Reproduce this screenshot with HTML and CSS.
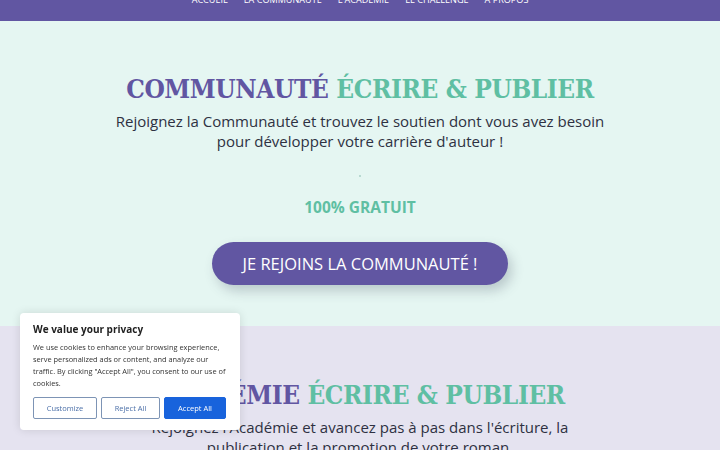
FILE: index.html
```html
<!DOCTYPE html>
<html lang="fr">
<head>
<meta charset="utf-8">
<title>Communauté Écrire & Publier</title>
<link rel="stylesheet" href="styles.css">
</head>
<body>
<header class="nav">
  <ul class="menu">
    <li>ACCUEIL</li>
    <li>LA COMMUNAUTÉ</li>
    <li>L'ACADÉMIE</li>
    <li>LE CHALLENGE</li>
    <li>À PROPOS</li>
  </ul>
</header>
<section class="hero hero-mint">
  <h1 class="title"><span class="purple">COMMUNAUTÉ</span> <span class="teal">ÉCRIRE &amp; PUBLIER</span></h1>
  <p class="lead">Rejoignez la Communauté et trouvez le soutien dont vous avez besoin<br>pour développer votre carrière d'auteur !</p>
  <div class="dot"></div>
  <p class="free">100% GRATUIT</p>
  <a class="cta">JE REJOINS LA COMMUNAUTÉ !</a>
</section>
<section class="hero hero-lav">
  <h2 class="title"><span class="purple">ACADÉMIE</span> <span class="teal">ÉCRIRE &amp; PUBLIER</span></h2>
  <p class="lead">Rejoignez l'Académie et avancez pas à pas dans l'écriture, la<br>publication et la promotion de votre roman.</p>
</section>
<div class="cookie">
  <p class="cookie-title">We value your privacy</p>
  <p class="cookie-text">We use cookies to enhance your browsing experience, serve personalized ads or content, and analyze our traffic. By clicking "Accept All", you consent to our use of cookies.</p>
  <div class="cookie-btns">
    <button class="btn btn-outline">Customize</button>
    <button class="btn btn-outline">Reject All</button>
    <button class="btn btn-fill">Accept All</button>
  </div>
</div>
</body>
</html>
```
FILE: styles.css
```css
* { box-sizing: border-box; }
html, body { margin: 0; padding: 0; }
body {
  font-family: "Open Sans", "DejaVu Sans", sans-serif;
  width: 720px;
  height: 450px;
  overflow: hidden;
  background: #e5e3f0;
}
.nav {
  height: 21px;
  background: #6156a2;
  overflow: hidden;
}
.menu {
  list-style: none;
  margin: -6px 0 0 0;
  padding: 0;
  display: flex;
  justify-content: center;
  gap: 16px;
  color: #fff;
  font-size: 9.1px;
  line-height: 12px;
}
.hero {
  display: flex;
  flex-direction: column;
  align-items: center;
  text-align: center;
}
.hero-mint {
  background: #e5f6f2;
  height: 305px;
  padding-top: 49px;
}
.hero-lav {
  background: #e5e3f0;
  padding-top: 50px;
}
.title {
  margin: 0;
  font-family: "DejaVu Serif Condensed", "DejaVu Serif", serif;
  font-stretch: condensed;
  font-weight: 700;
  font-size: 26px;
  line-height: 38px;
  letter-spacing: -0.4px;
}
.purple { color: #6156a2; }
.teal { color: #5fbfa3; }
.lead {
  margin: 3px 0 0 0;
  font-size: 15px;
  line-height: 20px;
  color: #2e3142;
}
.hero-lav .lead { margin-top: 3px; }
.dot {
  width: 2px;
  height: 2px;
  border-radius: 50%;
  background: #a9cfc6;
  margin-top: 24px;
}
.free {
  margin: 20px 0 0 0;
  font-size: 15.5px;
  font-weight: 700;
  line-height: 20px;
  color: #5fbfa3;
}
.cta {
  margin-top: 25px;
  width: 296px;
  height: 43px;
  border-radius: 22px;
  background: #6156a2;
  color: #fff;
  font-size: 16.5px;
  display: flex;
  align-items: center;
  justify-content: center;
  box-shadow: 4px 6px 12px rgba(60, 70, 90, 0.25);
}
.cookie {
  position: fixed;
  left: 20px;
  bottom: 20px;
  width: 220px;
  height: 117px;
  background: #fff;
  border-radius: 4px;
  box-shadow: 0 0 10px rgba(0, 0, 0, 0.12);
  padding: 10px 13px;
  color: #212121;
}
.cookie-title {
  margin: 0;
  font-weight: 700;
  font-size: 10px;
  line-height: 12px;
}
.cookie-text {
  margin: 6px 0 0 0;
  font-size: 7.4px;
  line-height: 12px;
  color: #333;
}
.cookie-btns {
  display: flex;
  gap: 4px;
  margin-top: 8px;
}
.btn {
  height: 22px;
  font-family: inherit;
  font-size: 7.5px;
  border-radius: 2px;
  padding: 0;
}
.btn-outline {
  background: #fff;
  border: 1.5px solid #7d94b5;
  color: #4b6fa8;
}
.btn:nth-child(1) { width: 64px; }
.btn:nth-child(2) { width: 59px; }
.btn-fill {
  width: 62px;
  background: #1863dc;
  border: 1.5px solid #1863dc;
  color: #fff;
}
```
